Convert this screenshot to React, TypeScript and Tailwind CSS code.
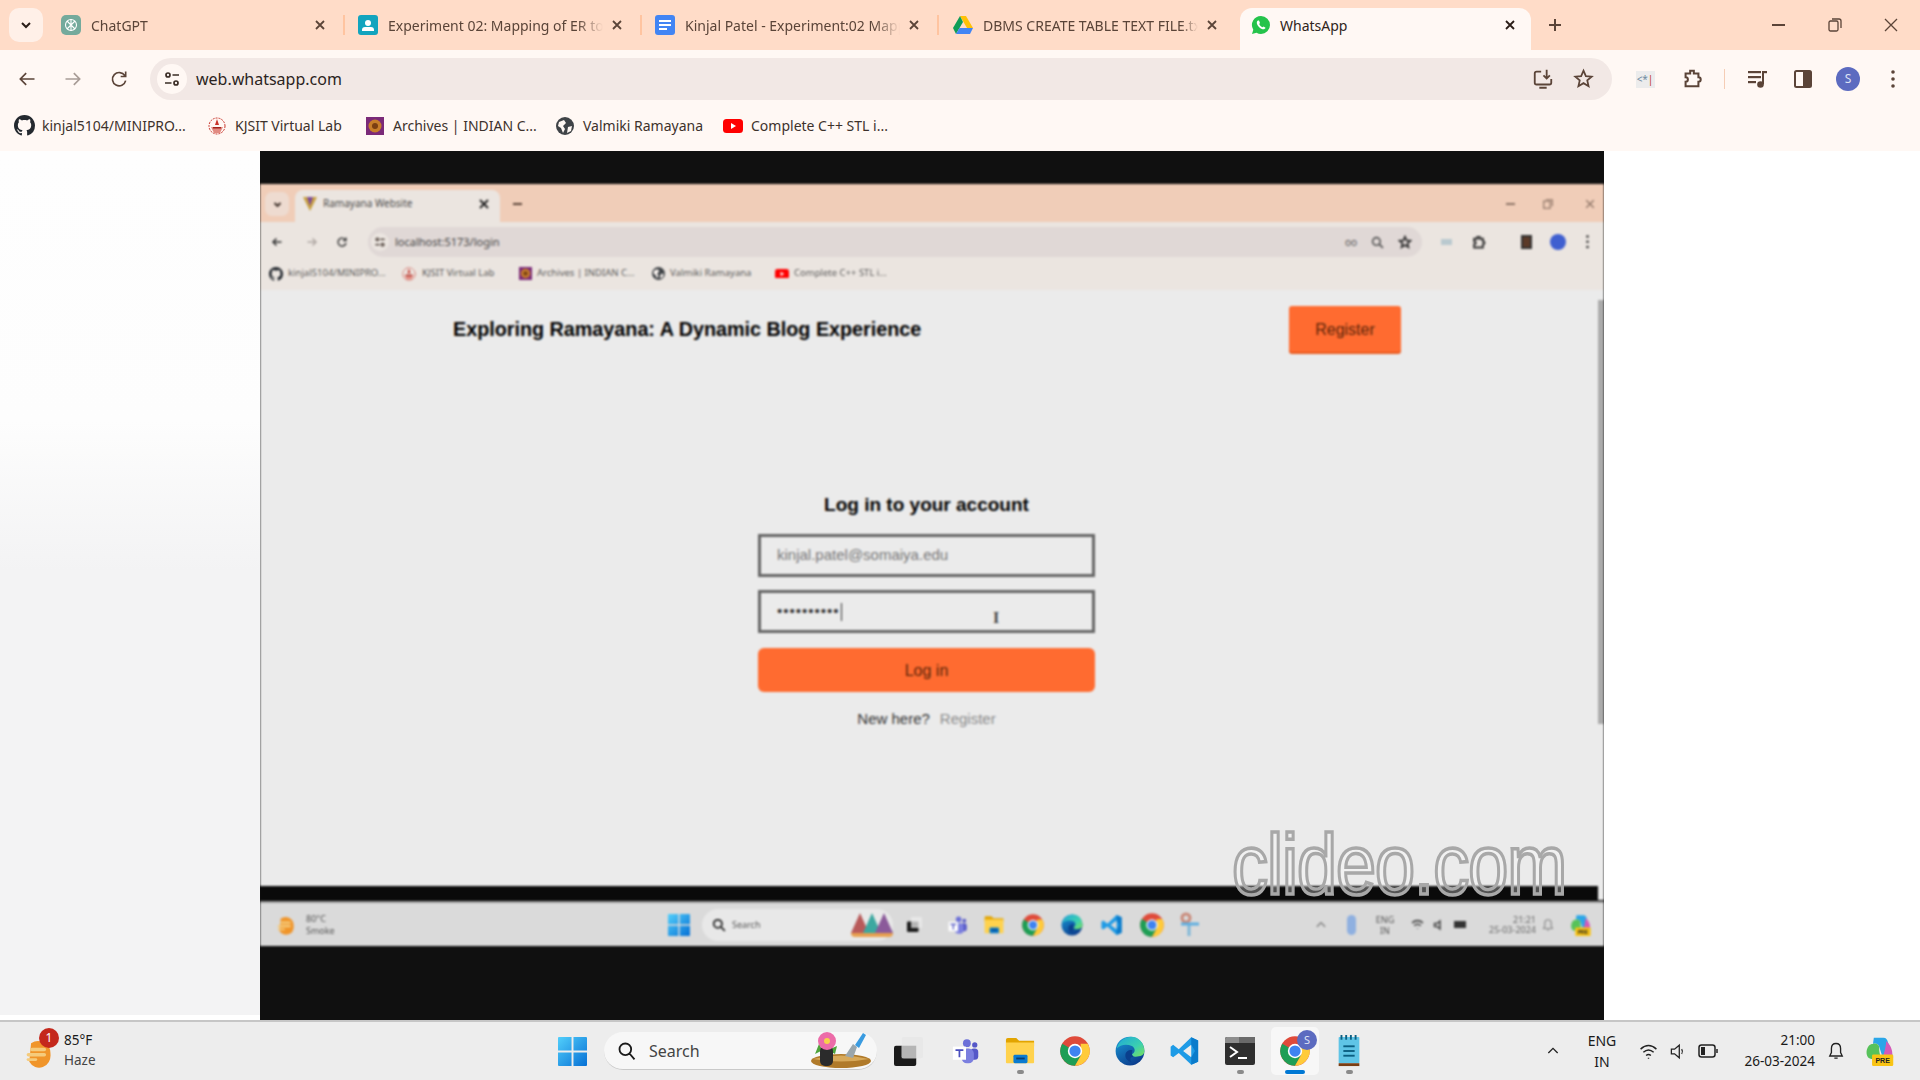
import React from "react";

type P = { s?: number; className?: string };

const Chrome = ({ s = 32 }: P) => (
  <svg width={s} height={s} viewBox="0 0 48 48" className="shrink-0">
    <circle cx="24" cy="24" r="23.5" fill="#DF4A3A" />
    <path d="M3.6 12.2 A23.5 23.5 0 0 0 24 47.5 L34 30 L24 24 Z" fill="#1E9E55" />
    <path d="M44.4 12.2 A23.5 23.5 0 0 1 24 47.5 L34 30 L33 12.2 Z" fill="#FFCB3A" />
    <circle cx="24" cy="24" r="11.5" fill="#fff" />
    <circle cx="24" cy="24" r="9" fill="#3F83F0" />
  </svg>
);

const Edge = ({ s = 32 }: P) => (
  <svg width={s} height={s} viewBox="0 0 48 48" className="shrink-0">
    <defs>
      <linearGradient id="e1" x1="0" y1="0" x2="1" y2="1">
        <stop offset="0" stopColor="#1FA8D8" />
        <stop offset="0.6" stopColor="#3BD0B0" />
        <stop offset="1" stopColor="#7CE05A" />
      </linearGradient>
      <linearGradient id="e2" x1="0" y1="0" x2="0.6" y2="1">
        <stop offset="0" stopColor="#1A9BD8" />
        <stop offset="1" stopColor="#0B3E8E" />
      </linearGradient>
    </defs>
    <circle cx="24" cy="24" r="23" fill="url(#e2)" />
    <path d="M3 20 C6 6 18 1 26 1 C38 1 47 11 47 24 C47 31 40 33 33 33 C28 33 26 31 27 29 C33 27 33 19 27 16 C18 12 8 14 3 20 Z" fill="url(#e1)" />
    <path d="M30 33 C24 33 23 38 27 42 C20 41 15 35 17 28 C19 23 24 21 28 23 C26 27 27 31 30 33 Z" fill="#0A3F8C" />
  </svg>
);

const VSCode = ({ s = 32 }: P) => (
  <svg width={s} height={s} viewBox="0 0 48 48" className="shrink-0">
    <path d="M34 2 L45 7 V41 L34 46 L14 27 L5 34 L1 31 V17 L5 14 L14 21 Z M34 14 L21 24 L34 34 Z" fill="#1E9BE6" fillRule="evenodd" />
    <path d="M34 2 L45 7 V41 L34 46 Z M34 14 V34 L40 24Z" fill="#0A7BCB" />
  </svg>
);

const Explorer = ({ s = 32 }: P) => (
  <svg width={s} height={s} viewBox="0 0 32 32" className="shrink-0">
    <path d="M1 4 a2 2 0 0 1 2-2 h9 l3 3 h16 v6 H1 Z" fill="#E2A400" />
    <path d="M1 7 h30 v21 a1 1 0 0 1-1 1 H2 a1 1 0 0 1-1-1 Z" fill="#FFD24D" />
    <rect x="9" y="20" width="15" height="9" rx="1.5" fill="#0A7BD0" />
    <rect x="12" y="23" width="9" height="2" fill="#053E75" />
  </svg>
);

const Teams = ({ s = 32 }: P) => (
  <svg width={s} height={s} viewBox="0 0 32 32" className="shrink-0">
    <circle cx="17" cy="7" r="4.5" fill="#6C70D8" />
    <circle cx="26" cy="9" r="3" fill="#5558C8" />
    <rect x="21" y="13" width="9" height="13" rx="4" fill="#5558C8" />
    <rect x="11" y="13" width="14" height="17" rx="6" fill="#7B7FDF" />
    <rect x="1" y="11" width="15" height="15" fill="#fff" />
    <path d="M4 14 h9 v2 h-3.5 v7 h-2 v-7 H4 Z" fill="#4B4FBE" />
  </svg>
);

const Win = ({ s = 30 }: P) => (
  <svg width={s} height={s} viewBox="0 0 30 30" className="shrink-0">
    <defs>
      <linearGradient id="w1" x1="0" y1="0" x2="1" y2="1">
        <stop offset="0" stopColor="#52CFFB" />
        <stop offset="1" stopColor="#0670D5" />
      </linearGradient>
    </defs>
    <path d="M0 1 a1 1 0 0 1 1-1 H14 V14 H0 Z M16 0 H29 a1 1 0 0 1 1 1 V14 H16 Z M0 16 H14 V30 H1 a1 1 0 0 1-1-1 Z M16 16 H30 V29 a1 1 0 0 1-1 1 H16 Z" fill="url(#w1)" />
  </svg>
);

const Terminal = ({ s = 30 }: P) => (
  <svg width={s} height={s} viewBox="0 0 30 30" className="shrink-0">
    <rect y="1" width="30" height="28" rx="2" fill="#2E2E2E" />
    <path d="M0 3 a2 2 0 0 1 2-2 h12 v6 H0 Z" fill="#8D8D8D" />
    <rect x="14" y="1" width="16" height="6" fill="#6A6A6A" />
    <path d="M5 11 L12 16 L5 21" stroke="#fff" strokeWidth="2" fill="none" />
    <rect x="13" y="21" width="9" height="2" fill="#fff" />
  </svg>
);

const Notepad = ({ s = 32 }: P) => (
  <svg width={s} height={s} viewBox="0 0 26 34" className="shrink-0">
    <rect x="2" y="2" width="22" height="28" rx="1" fill="#5FC4E6" />
    <rect x="2" y="30" width="22" height="3" fill="#7A3E14" />
    <g fill="#0B5F82">
      <rect x="7" y="11" width="12" height="2" />
      <rect x="7" y="16" width="12" height="2" />
      <rect x="7" y="21" width="12" height="2" />
      <rect x="4" y="0" width="2" height="5" />
      <rect x="9" y="0" width="2" height="5" />
      <rect x="14" y="0" width="2" height="5" />
      <rect x="19" y="0" width="2" height="5" />
    </g>
  </svg>
);

const TaskView = ({ s = 30 }: P) => (
  <svg width={s} height={s} viewBox="0 0 30 30" className="shrink-0">
    <rect x="0" y="9" width="23" height="21" rx="2" fill="#1A1A1A" />
    <rect x="8" y="0" width="22" height="22" rx="2" fill="#E8E8E8" />
    <rect x="8" y="9" width="15" height="13" fill="#B5B5B5" />
  </svg>
);

const Copilot = ({ s = 34 }: P) => (
  <svg width={s} height={s} viewBox="0 0 34 34" className="shrink-0">
    <path d="M10 2 H21 C24 2 25 4 26 7 L32 24 H20 L16 12 C15 9 12 8 9 9 Z" fill="#2AA6E8" />
    <path d="M9 9 C5 9 3 12 2 16 C1 21 3 26 7 26 H20 C17 23 16 19 16 12 C15 9 12 8 9 9 Z" fill="#57C25A" />
    <path d="M24 6 C27 8 31 14 31 20 C31 23 28 26 24 26 L20 26 C21 21 24 12 24 6 Z" fill="#D45AB8" />
    <rect x="8" y="21" width="24" height="13" rx="1.5" fill="#F9C414" />
    <text x="20" y="31" fontSize="8" fontWeight="700" textAnchor="middle" fill="#222" fontFamily="Liberation Sans">PRE</text>
  </svg>
);

const Weather = ({ s = 30 }: P) => (
  <svg width={s} height={s} viewBox="0 0 30 34" className="shrink-0">
    <path d="M6 6 A14 14 0 0 1 28 18 A13 14 0 0 1 4 27 Z" fill="#F0952A" />
    <g fill="#F5CB7C">
      <rect x="1" y="17" width="22" height="4" rx="2" />
      <rect x="5" y="11" width="18" height="4" rx="2" />
      <rect x="1" y="23" width="12" height="3" rx="1.5" />
    </g>
  </svg>
);

const Flower = () => (
  <svg width="62" height="38" viewBox="0 0 62 38" className="shrink-0">
    <ellipse cx="32" cy="29" rx="30" ry="7" fill="#B07A2A" />
    <path d="M4 27 Q32 20 60 27 Q32 32 4 27 Z" fill="#D7A95A" />
    <path d="M10 12 L6 22 L14 18 Z M19 18 L28 14 L26 22 Z" fill="#4EA33A" />
    <rect x="11" y="14" width="13" height="20" rx="5" fill="#2B2B2B" />
    <circle cx="18" cy="9" r="9" fill="#EC6BA8" />
    <circle cx="18" cy="9" r="3" fill="#F7D24A" />
    <path d="M36 24 L44 12 L48 15 L44 26 Z" fill="#9AA6AC" />
    <path d="M46 13 L54 1 L57 3 L50 16 Z" fill="#3A9BE0" />
  </svg>
);

const GitHub = ({ s = 20, c = "#24292f" }: P & { c?: string }) => (
  <svg width={s} height={s} viewBox="0 0 16 16" fill={c} className="shrink-0">
    <path d="M8 0C3.58 0 0 3.58 0 8c0 3.54 2.29 6.53 5.47 7.59.4.07.55-.17.55-.38 0-.19-.01-.82-.01-1.49-2.01.37-2.53-.49-2.69-.94-.09-.23-.48-.94-.82-1.13-.28-.15-.68-.52-.01-.53.63-.01 1.08.58 1.23.82.72 1.21 1.87.87 2.33.66.07-.52.28-.87.51-1.07-1.78-.2-3.64-.89-3.64-3.95 0-.87.31-1.59.82-2.15-.08-.2-.36-1.02.08-2.12 0 0 .67-.21 2.2.82.64-.18 1.32-.27 2-.27s1.36.09 2 .27c1.53-1.04 2.2-.82 2.2-.82.44 1.1.16 1.92.08 2.12.51.56.82 1.27.82 2.15 0 3.07-1.87 3.75-3.65 3.95.29.25.54.73.54 1.48 0 1.07-.01 1.93-.01 2.2 0 .21.15.46.55.38A8.01 8.01 0 0 0 16 8c0-4.42-3.58-8-8-8z" />
  </svg>
);

const Kjsit = ({ s = 18 }: P) => (
  <svg width={s} height={s} viewBox="0 0 18 18" className="shrink-0">
    <circle cx="9" cy="9" r="8" fill="none" stroke="#C9352B" strokeWidth="1" strokeDasharray="2 1" />
    <path d="M9 2 L11 8 H7 Z" fill="#C9352B" />
    <path d="M3 10 H15 L12 16 H6 Z" fill="#E28B82" />
    <rect x="5" y="10" width="8" height="1.5" fill="#A3241C" />
  </svg>
);

const Archives = ({ s = 18 }: P) => (
  <svg width={s} height={s} viewBox="0 0 18 18" className="shrink-0">
    <rect width="18" height="18" fill="#7B2A78" />
    <circle cx="9" cy="9" r="6.5" fill="#C77E2A" />
    <circle cx="9" cy="9" r="3" fill="#7A3F12" />
  </svg>
);

const Globe = ({ s = 18 }: P) => (
  <svg width={s} height={s} viewBox="0 0 18 18" className="shrink-0">
    <circle cx="9" cy="9" r="9" fill="#3F4347" />
    <path d="M3 5 L8 3 L10 6 L7 9 L9 12 L7 16 L5 11 L2 9 Z M12 10 L16 9 L15 14 L11 16 Z" fill="#FFF8F4" />
  </svg>
);

const YouTube = ({ s = 20 }: P) => (
  <svg width={s} height={(s * 14) / 20} viewBox="0 0 20 14" className="shrink-0">
    <rect width="20" height="14" rx="3.5" fill="#F00" />
    <path d="M8 4 L13 7 L8 10 Z" fill="#fff" />
  </svg>
);

const TabX = ({ c = "#5B4438" }: { c?: string }) => (
  <svg width="12" height="12" viewBox="0 0 12 12" className="shrink-0">
    <path d="M2 2 L10 10 M10 2 L2 10" stroke={c} strokeWidth="1.8" />
  </svg>
);

const Stroke = ({ s = 20, children, w = 2, c = "#5B4438" }: { s?: number; children: React.ReactNode; w?: number; c?: string }) => (
  <svg width={s} height={s} viewBox="0 0 24 24" fill="none" stroke={c} strokeWidth={w} className="shrink-0">
    {children}
  </svg>
);

const I = {
  back: <path d="M21 12 H4 M11 5 L4 12 L11 19" />,
  fwd: <path d="M3 12 H20 M13 5 L20 12 L13 19" />,
  reload: <path d="M19 8 A8 8 0 1 0 20 14 M20 3 V9 H14" />,
  star: <path d="M12 3 L14.7 9.2 L21.4 9.8 L16.3 14.2 L17.8 20.8 L12 17.3 L6.2 20.8 L7.7 14.2 L2.6 9.8 L9.3 9.2 Z" />,
  install: <path d="M10 4 H5 a2 2 0 0 0-2 2 V16 a2 2 0 0 0 2 2 H19 a2 2 0 0 0 2-2 V12 M16 2 V11 M12.5 8 L16 11.5 L19.5 8 M8 21.5 H16" />,
  puzzle: <path d="M10 3 H14 V6 H19 V10 A2.5 2.5 0 0 1 19 15 V20 H5 V15 A2.5 2.5 0 0 0 5 10 V6 H10 Z" />,
  bell: <path d="M12 3 C8 3 6.5 6 6.5 9 V14 L4.5 18 H19.5 L17.5 14 V9 C17.5 6 16 3 12 3 Z M10 20.5 H14" />,
  chev: <path d="M5 15 L12 8 L19 15" />,
};

const Media = () => (
  <svg width="22" height="22" viewBox="0 0 22 22" fill="#5B4438" className="shrink-0">
    <rect x="1" y="3" width="13" height="2.2" />
    <rect x="1" y="8" width="13" height="2.2" />
    <rect x="1" y="13" width="8" height="2.2" />
    <rect x="16" y="3" width="4" height="2.2" />
    <rect x="15" y="3" width="2" height="13" />
    <circle cx="13.5" cy="16.5" r="3.3" />
  </svg>
);

const Side = () => (
  <svg width="20" height="20" viewBox="0 0 20 20" className="shrink-0">
    <rect x="2" y="2" width="16" height="16" rx="1.5" fill="#FFF8F4" stroke="#5B4438" strokeWidth="2" />
    <rect x="10" y="2" width="8" height="16" fill="#5B4438" />
  </svg>
);

const Tune = ({ s = 18 }: P) => (
  <svg width={s} height={s} viewBox="0 0 18 18" fill="none" stroke="#3A2C25" strokeWidth="1.7" className="shrink-0">
    <circle cx="5" cy="5" r="2" />
    <path d="M9.5 5 H16 M2 13 H8.5" />
    <circle cx="13" cy="13" r="2" />
  </svg>
);

const Dots = ({ c = "#5B4438", s = 4 }: { c?: string; s?: number }) => (
  <svg width={s} height={s * 4.5} viewBox="0 0 4 18" fill={c} className="shrink-0">
    <circle cx="2" cy="2" r="1.8" />
    <circle cx="2" cy="9" r="1.8" />
    <circle cx="2" cy="16" r="1.8" />
  </svg>
);

const ExtBadge = () => (
  <div className="flex h-[17px] w-[19px] items-center justify-center bg-[#ECECEC] text-[10px] leading-none text-[#6f8aa0]">
    <span>&lt;*</span>
    <span className="text-[#c0392b]">|</span>
  </div>
);

const Tab = ({ icon, title }: { icon: React.ReactNode; title: string }) => (
  <div className="flex h-[34px] w-[297px] shrink-0 items-center pl-[13px]">
    <div className="flex w-[20px] justify-center">{icon}</div>
    <div className="ml-[10px] w-[215px] overflow-hidden whitespace-nowrap text-[14px] text-[#5A4438] [mask-image:linear-gradient(to_right,black_88%,transparent)]">
      {title}
    </div>
    <div className="ml-[2px] flex w-[24px] justify-center"><TabX /></div>
    <div className="ml-auto h-[20px] w-[2px] bg-[#FFC4A0]" />
  </div>
);

const Bookmark = ({ icon, label, w }: { icon: React.ReactNode; label: string; w: string }) => (
  <div className={`flex items-center ${w}`}>
    <div className="flex w-[22px] justify-center">{icon}</div>
    <span className="ml-[7px] whitespace-nowrap text-[14px] text-[#3d322c]">{label}</span>
  </div>
);

const Dot = ({ active }: { active?: boolean }) =>
  active ? <div className="mt-[1px] h-[4px] w-[20px] rounded-full bg-[#0078D4]" /> : <div className="mt-[1px] h-[4px] w-[7px] rounded-full bg-[#8a8a8a]" />;

const TaskIcon = ({ children, dot, active }: { children: React.ReactNode; dot?: boolean; active?: boolean }) => (
  <div className={`relative flex h-[48px] w-[48px] shrink-0 flex-col items-center justify-center rounded-[5px] ${active ? "bg-[#F7F7F7]" : ""}`}>
    {children}
    {(dot || active) && <div className="absolute bottom-[1px] flex justify-center"><Dot active={active} /></div>}
  </div>
);

function OuterTabs() {
  return (
    <div className="flex h-[50px] items-end bg-[#FFDCC8] font-['Noto_Sans']">
      <div className="mb-[8px] ml-[9px] flex h-[34px] w-[34px] shrink-0 items-center justify-center rounded-[10px] bg-[#FFF0E8]">
        <svg width="12" height="12" viewBox="0 0 12 12" fill="none" stroke="#2a1d17" strokeWidth="2">
          <path d="M2 4 L6 8 L10 4" />
        </svg>
      </div>
      <div className="mb-[8px] ml-[5px] flex">
        <Tab
          title="ChatGPT"
          icon={
            <div className="flex h-[20px] w-[20px] items-center justify-center rounded-[5px] bg-[#74AA9C]">
              <svg width="14" height="14" viewBox="0 0 14 14" fill="none" stroke="#fff" strokeWidth="1.1">
                <circle cx="7" cy="7" r="5.5" />
                <path d="M3 3 L11 11 M11 3 L3 11 M7 1 V13" />
              </svg>
            </div>
          }
        />
        <Tab
          title="Experiment 02: Mapping of ER to Relational"
          icon={
            <div className="flex h-[20px] w-[20px] flex-col items-center justify-center rounded-[3px] bg-[#12A4BE]">
              <div className="h-[6px] w-[6px] rounded-full bg-white" />
              <div className="mt-[1px] h-[4px] w-[12px] rounded-t-[3px] bg-white" />
            </div>
          }
        />
        <Tab
          title="Kinjal Patel - Experiment:02 Mapping of"
          icon={
            <div className="flex h-[20px] w-[20px] flex-col justify-center gap-[2px] rounded-[3px] bg-[#4285F4] px-[4px]">
              <div className="h-[2px] bg-white" />
              <div className="h-[2px] bg-white" />
              <div className="h-[2px] w-[8px] bg-white" />
            </div>
          }
        />
        <div className="flex h-[34px] w-[301px] shrink-0 items-center pl-[14px]">
          <svg width="20" height="18" viewBox="0 0 20 18" className="shrink-0">
            <path d="M7 0 H13 L20 12 H14 Z" fill="#FFC107" />
            <path d="M7 0 L0 12 L3 18 L10 6 Z" fill="#0F9D58" />
            <path d="M3 18 H17 L20 12 H6.5 Z" fill="#4285F4" />
          </svg>
          <div className="ml-[10px] w-[215px] overflow-hidden whitespace-nowrap text-[14px] text-[#5A4438] [mask-image:linear-gradient(to_right,black_92%,transparent)]">
            DBMS CREATE TABLE TEXT FILE.txt
          </div>
          <div className="ml-[2px] flex w-[24px] justify-center"><TabX /></div>
        </div>
      </div>
      <div className="flex h-[42px] w-[291px] shrink-0 items-center rounded-t-[12px] bg-[#FFF8F4] pb-[8px] pl-[11px]">
        <svg width="20" height="20" viewBox="0 0 20 20" className="shrink-0">
          <path d="M10 1 A9 9 0 0 1 10 19 A9 9 0 0 1 5.5 17.8 L1 19 L2.3 14.7 A9 9 0 0 1 10 1 Z" fill="#25C34B" />
          <path d="M7 5.5 C6 6 5.5 7 6 9 C7 11.5 9 13.5 11.5 14.2 C13 14.5 14.2 14 14.5 12.8 L12.6 11.5 L11.6 12.2 C10 11.6 8.8 10.3 8.2 8.9 L9 8 L8 5.6 Z" fill="#fff" />
        </svg>
        <span className="ml-[9px] text-[14px] text-[#2f2420]">WhatsApp</span>
        <div className="ml-auto mr-[9px] flex w-[24px] justify-center"><TabX c="#2a1d17" /></div>
      </div>
      <div className="mb-[8px] ml-[12px] flex h-[34px] w-[24px] items-center justify-center">
        <svg width="16" height="16" viewBox="0 0 16 16" stroke="#5B4438" strokeWidth="2">
          <path d="M8 2 V14 M2 8 H14" />
        </svg>
      </div>
      <div className="mb-[8px] ml-auto flex h-[34px] items-center">
        <div className="mr-[2px] flex w-[54px] justify-center">
          <div className="h-[1.5px] w-[13px] bg-[#5B4438]" />
        </div>
        <div className="flex w-[56px] justify-center">
          <svg width="14" height="14" viewBox="0 0 14 14" fill="none" stroke="#5B4438" strokeWidth="1.3">
            <rect x="1" y="3" width="9" height="10" rx="1.5" />
            <path d="M4 1 H11 a2 2 0 0 1 2 2 V10" />
          </svg>
        </div>
        <div className="mr-[1px] flex w-[56px] justify-center">
          <svg width="16" height="16" viewBox="0 0 16 16" stroke="#5B4438" strokeWidth="1.3">
            <path d="M2 2 L14 14 M14 2 L2 14" />
          </svg>
        </div>
      </div>
    </div>
  );
}

function OuterToolbar() {
  return (
    <div className="flex h-[50px] items-end bg-[#FFF8F4] font-['Noto_Sans']">
      <div className="flex h-[42px] items-center pl-[4px]">
        <div className="flex w-[46px] justify-center"><Stroke s={20}>{I.back}</Stroke></div>
        <div className="flex w-[46px] justify-center"><Stroke s={20} c="#A89C96">{I.fwd}</Stroke></div>
        <div className="flex w-[46px] justify-center"><Stroke s={20}>{I.reload}</Stroke></div>
      </div>
      <div className="ml-[8px] flex h-[42px] w-[1462px] shrink-0 items-center rounded-full bg-[#F2E8E5] pl-[7px]">
        <div className="flex h-[30px] w-[30px] items-center justify-center rounded-full bg-[#FFF8F4]"><Tune /></div>
        <span className="ml-[9px] text-[16px] text-[#2b2421]">web.whatsapp.com</span>
        <div className="ml-auto mr-[9px] flex">
          <div className="flex w-[40px] justify-center"><Stroke s={22}>{I.install}</Stroke></div>
          <div className="flex w-[40px] justify-center"><Stroke s={21}>{I.star}</Stroke></div>
        </div>
      </div>
      <div className="ml-[10px] flex h-[42px] items-center">
        <div className="flex w-[46px] justify-center"><ExtBadge /></div>
        <div className="flex w-[47px] justify-center"><Stroke s={22} w={2.2}>{I.puzzle}</Stroke></div>
        <div className="flex w-[18px] justify-center"><div className="h-[20px] w-[1px] bg-[#F5CDB5]" /></div>
        <div className="ml-[3px] flex w-[44px] justify-center"><Media /></div>
        <div className="flex w-[46px] justify-center"><Side /></div>
        <div className="flex w-[44px] justify-center">
          <div className="flex h-[24px] w-[24px] items-center justify-center rounded-full bg-[#5C6BC0] text-[12px] text-[#dfe3f5]">S</div>
        </div>
        <div className="flex w-[46px] justify-center"><Dots /></div>
      </div>
    </div>
  );
}

function OuterBookmarks() {
  return (
    <div className="flex h-[51px] items-center bg-[#FFF8F4] pl-[13px] font-['Noto_Sans']">
      <Bookmark w="w-[193px]" icon={<GitHub s={21} />} label="kinjal5104/MINIPRO..." />
      <Bookmark w="w-[158px]" icon={<Kjsit />} label="KJSIT Virtual Lab" />
      <Bookmark w="w-[190px]" icon={<Archives />} label="Archives | INDIAN C..." />
      <Bookmark w="w-[168px]" icon={<Globe />} label="Valmiki Ramayana" />
      <Bookmark w="w-[190px]" icon={<YouTube />} label="Complete C++ STL i..." />
    </div>
  );
}

function InnerChrome() {
  return (
    <div className="font-['Noto_Sans']">
      <div className="flex h-[38px] items-end bg-[#F0CDB8]">
        <div className="mb-[6px] ml-[5px] flex h-[24px] w-[24px] items-center justify-center rounded-[7px] bg-[#EEDBD0]">
          <svg width="9" height="9" viewBox="0 0 12 12" fill="none" stroke="#3a2c25" strokeWidth="2.5"><path d="M2 4 L6 8 L10 4" /></svg>
        </div>
        <div className="ml-[6px] flex h-[32px] w-[205px] items-center rounded-t-[8px] bg-[#EBE5E0] pb-[5px] pl-[8px]">
          <svg width="14" height="16" viewBox="0 0 14 16" className="shrink-0">
            <path d="M0 1 H14 L7 15 Z" fill="#C8A040" />
            <path d="M4 1 H10 L7 10 Z" fill="#7A4A9A" />
          </svg>
          <span className="ml-[6px] text-[10px] text-[#4a4a4a]">Ramayana Website</span>
          <div className="ml-auto mr-[10px]"><TabX c="#222" /></div>
        </div>
        <div className="mb-[17px] ml-[13px] h-[2px] w-[9px] bg-[#5B4438]" />
        <div className="mb-[13px] ml-auto flex items-center">
          <div className="h-[1.5px] w-[9px] bg-[#8d7466]" />
          <svg className="ml-[28px]" width="10" height="10" viewBox="0 0 14 14" fill="none" stroke="#8d7466" strokeWidth="1.6"><rect x="1" y="3" width="9" height="10" /><path d="M4 1 H13 V10" /></svg>
          <svg className="ml-[32px] mr-[9px]" width="10" height="10" viewBox="0 0 16 16" stroke="#8d7466" strokeWidth="2"><path d="M2 2 L14 14 M14 2 L2 14" /></svg>
        </div>
      </div>
      <div className="flex h-[35px] items-end bg-[#EBE5E0]">
        <div className="flex h-[30px] items-center pl-[8px]">
          <div className="flex w-[18px] justify-center"><Stroke s={12} w={3} c="#333">{I.back}</Stroke></div>
          <div className="ml-[17px] flex w-[18px] justify-center"><Stroke s={12} w={3} c="#b0a8a4">{I.fwd}</Stroke></div>
          <div className="ml-[12px] flex w-[18px] justify-center"><Stroke s={12} w={3} c="#444">{I.reload}</Stroke></div>
        </div>
        <div className="ml-[17px] flex h-[30px] w-[1054px] items-center rounded-full bg-[#E0D8D6] pl-[3px]">
          <div className="flex h-[18px] w-[18px] items-center justify-center rounded-full bg-[#EBE5E0]"><Tune s={12} /></div>
          <span className="ml-[6px] text-[11px] text-[#444]">localhost:5173/login</span>
          <div className="ml-auto mr-[10px] flex items-center gap-[14px]">
            <span className="text-[10px] leading-none text-[#555]">oo</span>
            <Stroke s={13} w={3} c="#555"><path d="M10 10 m-7 0 a7 7 0 1 0 14 0 a7 7 0 1 0-14 0 M15 15 L22 22" /></Stroke>
            <Stroke s={14} w={3} c="#333">{I.star}</Stroke>
          </div>
        </div>
        <div className="flex h-[30px] flex-1 items-center">
          <div className="ml-[19px] h-[6px] w-[11px] bg-[#B9C9CF]" />
          <div className="ml-[19px]"><Stroke s={15} w={3} c="#333">{I.puzzle}</Stroke></div>
          <div className="ml-[35px] h-[14px] w-[11px] border-[2px] border-[#333] bg-[#5B3A28]" />
          <div className="ml-[18px] h-[16px] w-[16px] rounded-full bg-[#3F5FD0]" />
          <div className="ml-[20px]"><Dots c="#333" s={3} /></div>
        </div>
      </div>
      <div className="flex h-[33px] items-center bg-[#EBE5E0] pl-[9px] text-[9.5px] text-[#5b5b5b]">
        <GitHub s={14} />
        <span className="ml-[5px] w-[114px] whitespace-nowrap">kinjal5104/MINIPRO...</span>
        <Kjsit s={14} />
        <span className="ml-[6px] w-[97px] whitespace-nowrap">KJSIT Virtual Lab</span>
        <Archives s={13} />
        <span className="ml-[5px] w-[115px] whitespace-nowrap">Archives | INDIAN C...</span>
        <Globe s={13} />
        <span className="ml-[5px] w-[105px] whitespace-nowrap">Valmiki Ramayana</span>
        <YouTube s={14} />
        <span className="ml-[5px] whitespace-nowrap">Complete C++ STL i...</span>
      </div>
    </div>
  );
}

function InnerPage() {
  return (
    <div className="relative h-[596px] bg-[#EBEBEB] font-['Liberation_Sans'] text-black">
      <div className="flex h-[110px] items-center pb-[32px] pl-[193px]">
        <h1 className="mt-[2px] w-[836px] shrink-0 text-[19.75px] font-bold leading-none">Exploring Ramayana: A Dynamic Blog Experience</h1>
        <button className="h-[46px] w-[112px] rounded-[3px] bg-[#FF6B30] pt-[2px] text-[16px] text-[#5a2408] [box-shadow:0_2px_0_#E85A1E]">Register</button>
      </div>
      <div className="ml-[498px] mt-[93px] flex w-[337px] flex-col items-center">
        <h2 className="h-[24px] text-[19px] font-bold leading-[24px]">Log in to your account</h2>
        <div className="mt-[17px] flex h-[43px] w-full items-center border-[3px] border-[#666] px-[16px] text-[15px] text-[#777]">kinjal.patel@somaiya.edu</div>
        <div className="relative mt-[13px] flex h-[43px] w-full items-center border-[3px] border-[#666] px-[16px] text-[15px] tracking-[1px] text-[#333]">
          ••••••••••<span className="ml-[1px] h-[18px] w-[1px] bg-[#333]" />
          <span className="absolute left-[232px] top-[17px] font-['Liberation_Serif'] text-[16px] font-bold leading-none text-[#444]">I</span>
        </div>
        <button className="mt-[15px] h-[44px] w-full rounded-[6px] bg-[#FF6B30] pt-[2px] text-[16px] text-[#5a2408]">Log in</button>
        <div className="mt-[17px] text-[15px] leading-[20px]">
          <span className="text-[#333]">New here?</span>
          <span className="ml-[10px] text-[#8a8a8a]">Register</span>
        </div>
      </div>
      <div className="absolute bottom-[-14px] right-0 top-[4px] w-[6px] bg-[#EBEBEB]">
        <div className="mt-[6px] h-[424px] w-full bg-[#ABABAB]" />
      </div>
    </div>
  );
}

function InnerTaskbar() {
  return (
    <div className="flex h-[43px] items-center bg-[#DADADA] font-['Noto_Sans'] text-[9px] leading-[12px] text-[#555]">
      <div className="ml-[16px]"><Weather s={20} /></div>
      <div className="ml-[10px] w-[44px] shrink-0">
        <div>80°C</div>
        <div>Smoke</div>
      </div>
      <div className="ml-[318px]"><Win s={22} /></div>
      <div className="ml-[12px] flex h-[32px] w-[191px] shrink-0 items-center rounded-full bg-[#E8E8E8] pl-[10px]">
        <Stroke s={14} w={3} c="#222"><path d="M10 10 m-7 0 a7 7 0 1 0 14 0 a7 7 0 1 0-14 0 M15 15 L22 22" /></Stroke>
        <span className="ml-[6px]">Search</span>
        <div className="ml-auto flex flex-col items-center">
          <div className="flex">
            <div className="h-0 w-0 border-x-[9px] border-b-[20px] border-x-transparent border-b-[#B85A5A]" />
            <div className="ml-[-6px] h-0 w-0 border-x-[9px] border-b-[20px] border-x-transparent border-b-[#3CA8A0]" />
            <div className="ml-[-6px] h-0 w-0 border-x-[9px] border-b-[20px] border-x-transparent border-b-[#8B5A9A]" />
          </div>
          <div className="h-[4px] w-[42px] rounded-b-full bg-[#E8A050]" />
        </div>
      </div>
      <div className="ml-[14px]"><TaskView s={15} /></div>
      <div className="ml-[26px]"><Teams s={20} /></div>
      <div className="ml-[16px]"><Explorer s={20} /></div>
      <div className="ml-[18px]"><Chrome s={22} /></div>
      <div className="ml-[17px]"><Edge s={22} /></div>
      <div className="ml-[18px]"><VSCode s={22} /></div>
      <div className="ml-[17px]"><Chrome s={24} /></div>
      <div className="ml-[14px]">
        <svg width="22" height="26" viewBox="0 0 22 26" fill="none" strokeWidth="3" className="shrink-0">
          <circle cx="8" cy="6" r="4" stroke="#C98A7A" />
          <path d="M11 11 L11 24" stroke="#7EB7D8" />
          <path d="M3 12 H21" stroke="#5FAEE0" />
        </svg>
      </div>
      <div className="ml-[114px]"><Stroke s={14} w={2} c="#777">{I.chev}</Stroke></div>
      <div className="ml-[19px] h-[20px] w-[9px] shrink-0 rounded-full bg-[#8FB0E0]" />
      <div className="ml-[19px] w-[20px] shrink-0 text-center leading-[11px]">
        <div>ENG</div>
        <div>IN</div>
      </div>
      <div className="ml-[16px] flex items-center gap-[9px]">
        <Stroke s={13} w={3} c="#444"><path d="M2 9 Q12 1 22 9 M6 14 Q12 9 18 14 M12 20 V19" /></Stroke>
        <Stroke s={12} w={3} c="#444"><path d="M3 9 V15 H8 L14 20 V4 L8 9 Z" /></Stroke>
        <div className="h-[7px] w-[12px] shrink-0 bg-[#333]" />
      </div>
      <div className="ml-[10px] w-[60px] shrink-0 text-right leading-[10px] text-[#666]">
        <div>21:21</div>
        <div>25-03-2024</div>
      </div>
      <div className="ml-[5px]"><Stroke s={14} w={2} c="#888">{I.bell}</Stroke></div>
      <div className="ml-[15px]"><Copilot s={22} /></div>
    </div>
  );
}

function InnerVideo() {
  return (
    <div className="relative h-full w-[1344px] shrink-0 overflow-hidden bg-[#101010]">
      <div className="blur-[1px]">
        <div className="h-[33px] bg-[#101010]" />
        <InnerChrome />
        <InnerPage />
        <div className="h-[17px] border-b-[2px] border-b-[#9a9a9a] bg-[#0a0a0a]" />
        <InnerTaskbar />
      </div>
      <div className="absolute left-[972px] top-[663px] scale-y-[1.18] font-['Liberation_Sans'] text-[72px] leading-[100px] tracking-[-1px] text-white/30 blur-[0.6px] [-webkit-text-stroke:3px_#A8A8A8]">
        clideo.com
      </div>
    </div>
  );
}

function Taskbar() {
  return (
    <div className="flex h-[60px] items-center border-t-[2px] border-t-[#C6C6C6] bg-[#EDEDED] font-['Noto_Sans'] text-[#1a1a1a]">
      <div className="relative ml-[24px] h-[34px] w-[30px] shrink-0">
        <div className="mt-[4px]"><Weather s={30} /></div>
        <div className="absolute left-[15px] top-[-6px] flex h-[20px] w-[20px] items-center justify-center rounded-full bg-[#C4281C] text-[12px] text-white">1</div>
      </div>
      <div className="mb-[2px] ml-[10px] w-[494px] shrink-0 text-[13.5px] leading-[20px]">
        <div>85°F</div>
        <div className="text-[#444]">Haze</div>
      </div>
      <Win s={29} />
      <div className="ml-[17px] flex h-[38px] w-[273px] shrink-0 items-center rounded-full border-b-[1px] border-b-[#c9c9c9] bg-[#F7F7F7] pl-[13px]">
        <Stroke s={20} w={2.2} c="#1a1a1a"><path d="M10 10 m-7 0 a7 7 0 1 0 14 0 a7 7 0 1 0-14 0 M15 15 L21 22" /></Stroke>
        <span className="ml-[12px] text-[16px] text-[#444]">Search</span>
        <div className="ml-auto mr-[6px]"><Flower /></div>
      </div>
      <div className="ml-[17px]"><TaskView s={29} /></div>
      <div className="ml-[19px] flex">
        <TaskIcon><Teams s={28} /></TaskIcon>
        <div className="ml-[6px]"><TaskIcon dot><Explorer s={30} /></TaskIcon></div>
        <div className="ml-[7px]"><TaskIcon><Chrome s={30} /></TaskIcon></div>
        <div className="ml-[7px]"><TaskIcon><Edge s={30} /></TaskIcon></div>
        <div className="ml-[7px]"><TaskIcon><VSCode s={30} /></TaskIcon></div>
        <div className="ml-[7px]"><TaskIcon dot><Terminal s={30} /></TaskIcon></div>
        <div className="ml-[7px]">
          <TaskIcon active>
            <Chrome s={30} />
            <div className="absolute right-[2px] top-[3px] flex h-[20px] w-[20px] items-center justify-center rounded-full bg-[#5C6BC0] text-[11px] text-[#dfe3f5]">S</div>
          </TaskIcon>
        </div>
        <div className="ml-[6px]"><TaskIcon dot><Notepad s={32} /></TaskIcon></div>
      </div>
      <div className="ml-[172px]"><Stroke s={16} w={2} c="#222">{I.chev}</Stroke></div>
      <div className="ml-[25px] w-[32px] shrink-0 text-center text-[14px] leading-[21px]">
        <div>ENG</div>
        <div>IN</div>
      </div>
      <div className="ml-[21px] flex items-center">
        <Stroke s={19} w={1.8} c="#222"><path d="M2 9 Q12 0 22 9 M5.5 13 Q12 7 18.5 13 M9 17 Q12 14.5 15 17 M12 21 V20" /></Stroke>
        <div className="ml-[11px]"><Stroke s={19} w={1.6} c="#222"><path d="M3 9 V15 H7 L13 20 V4 L7 9 Z M16 9 Q18 12 16 15" /></Stroke></div>
        <svg className="ml-[10px] shrink-0" width="20" height="14" viewBox="0 0 20 14" fill="none" stroke="#222" strokeWidth="1.5">
          <rect x="1" y="1" width="16" height="12" rx="2.5" />
          <rect x="3" y="3" width="4" height="8" fill="#222" stroke="none" />
          <path d="M19 5 V9" />
        </svg>
      </div>
      <div className="ml-auto w-[80px] shrink-0 text-right text-[13.5px] leading-[21px]">
        <div>21:00</div>
        <div>26-03-2024</div>
      </div>
      <div className="ml-[11px]"><Stroke s={20} w={1.6} c="#222">{I.bell}</Stroke></div>
      <div className="ml-[19px] mr-[25px]"><Copilot s={30} /></div>
    </div>
  );
}

export default function App() {
  return (
    <div className="flex h-[1080px] w-[1920px] flex-col overflow-hidden bg-white">
      <OuterTabs />
      <OuterToolbar />
      <OuterBookmarks />
      <div className="flex h-[869px]">
        <div className="w-[260px] shrink-0 bg-[linear-gradient(to_bottom,#fefefe_0,#fdfdfd_270px,#f3f3f4_420px,#f3f3f4_864px,#ffffff_864px)]" />
        <InnerVideo />
        <div className="flex-1 bg-white" />
      </div>
      <Taskbar />
    </div>
  );
}
